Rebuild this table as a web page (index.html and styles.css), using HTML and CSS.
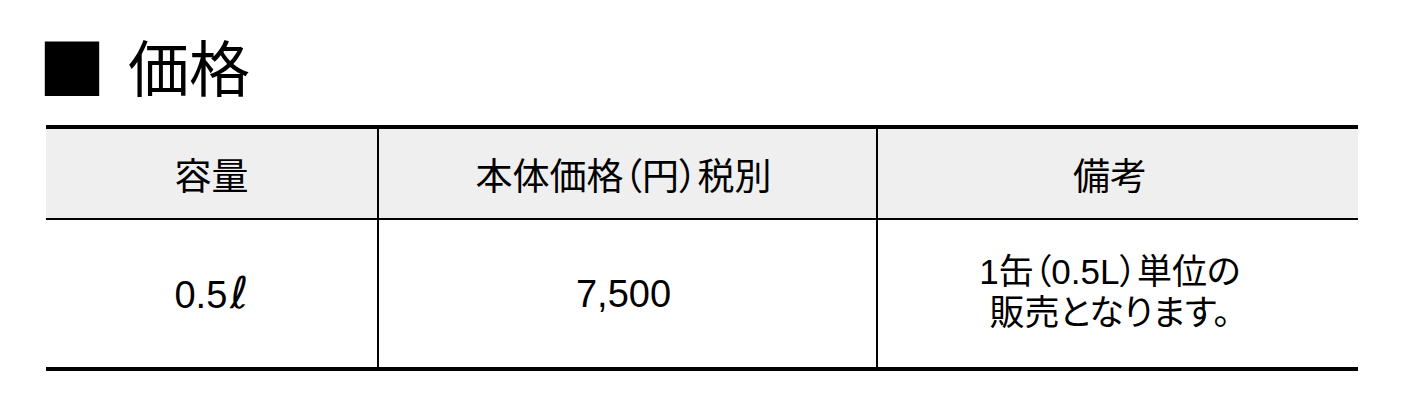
FILE: index.html
```html
<!DOCTYPE html>
<html lang="ja">
<head>
<meta charset="utf-8">
<title>価格</title>
<link rel="stylesheet" href="styles.css">
</head>
<body>
<section class="price">
  <h2 class="price-title"><span class="mark">■</span><span class="title-text">価格</span></h2>
  <table class="price-table">
    <colgroup>
      <col class="c1">
      <col class="c2">
      <col class="c3">
    </colgroup>
    <thead>
      <tr>
        <th>容量</th>
        <th class="div col-price">本体価格（円）税別</th>
        <th class="div col-note">備考</th>
      </tr>
    </thead>
    <tbody>
      <tr>
        <td class="num">0.5<span class="litre">ℓ</span></td>
        <td class="num div col-price">7,500</td>
        <td class="note div col-note">1缶（0.5L）単位の<br>販売となります。</td>
      </tr>
    </tbody>
  </table>
</section>
</body>
</html>
```
FILE: styles.css
```css
html, body {
  margin: 0;
  padding: 0;
  background: #ffffff;
  color: #000000;
  font-family: "Liberation Sans", "Noto Sans CJK JP", sans-serif;
}

.price {
  margin: 0 45px 0 46px;
  padding-top: 36px;
}

.price-title {
  margin: 0;
  display: flex;
  align-items: center;
  height: 60px;
  font-weight: 400;
  font-family: "Noto Sans CJK JP", sans-serif;
  font-size: 61px;
  line-height: 60px;
}

.mark {
  font-size: 68px;
  line-height: 60px;
  margin-left: -8px;
}

.title-text {
  margin-left: 22px;
}

.price-table {
  width: 100%;
  margin-top: 29px;
  table-layout: fixed;
  border-collapse: separate;
  border-spacing: 0;
  border-top: 4px solid #000;
  border-bottom: 4px solid #000;
}

.c1 { width: 331px; }
.c2 { width: 499px; }
.c3 { width: 482px; }

.price-table th,
.price-table td {
  padding: 0;
  text-align: center;
  vertical-align: middle;
  box-sizing: border-box;
}

.price-table th {
  height: 91px;
  background: #efefef;
  border-bottom: 2px solid #000;
  font-family: "Noto Sans CJK JP", sans-serif;
  font-weight: 400;
  font-size: 37px;
  line-height: 40px;
  font-feature-settings: "palt";
}

.price-table td {
  height: 147px;
}

.price-table .div {
  border-left: 2px solid #000;
}

.price-table .col-price {
  padding-right: 8px;
}

.price-table .col-note {
  padding-right: 16px;
}

.num {
  font-size: 38px;
  line-height: 44px;
}

.litre {
  font-family: "DejaVu Sans", sans-serif;
  font-size: 44px;
  margin-left: 3px;
}

.price-table .note {
  font-size: 35px;
  line-height: 41px;
  font-feature-settings: "palt";
  padding-bottom: 3px;
}
```
